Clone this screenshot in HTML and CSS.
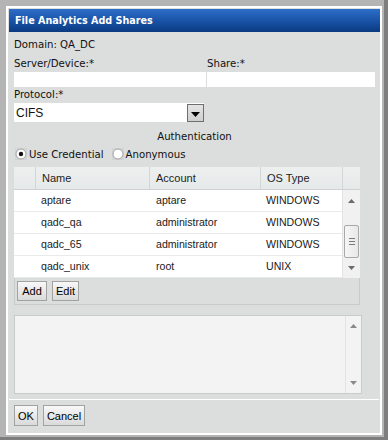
FILE: index.html
```html
<!DOCTYPE html>
<html lang="en">
<head>
    <meta charset="UTF-8">
    <title>File Analytics Add Shares</title>
    <link rel="stylesheet" href="styles.css">
</head>
<body>
    <div class="frame">
        <div class="dialog">
            <div class="titlebar">File Analytics Add Shares</div>

            <div class="content">
                <div class="line">Domain: QA_DC</div>

                <div class="pair">
                    <div class="field server">
                        <div class="line">Server/Device:*</div>
                        <div class="textbox"></div>
                    </div>
                    <div class="field share">
                        <div class="line">Share:*</div>
                        <div class="textbox"></div>
                    </div>
                </div>

                <div class="line label-protocol">Protocol:*</div>
                <div class="select">
                    <span class="select-value">CIFS</span>
                    <span class="select-btn">
                        <svg width="9" height="5" viewBox="0 0 9 5"><path d="M0 0h9L4.5 5z" fill="#000"/></svg>
                    </span>
                </div>

                <div class="line auth-title">Authentication</div>
                <div class="radios">
                    <label class="radio">
                        <svg width="12" height="12" viewBox="0 0 12 12">
                            <rect width="12" height="12" fill="#d2d4d3"/>
                            <circle cx="6" cy="6" r="5" fill="#fff" stroke="#a3a3a3"/>
                            <circle cx="6" cy="6" r="2.2" fill="#111"/>
                        </svg>
                        Use Credential
                    </label>
                    <label class="radio">
                        <svg width="12" height="12" viewBox="0 0 12 12">
                            <rect width="12" height="12" fill="#d2d4d3"/>
                            <circle cx="6" cy="6" r="5" fill="#fff" stroke="#a3a3a3"/>
                        </svg>
                        Anonymous
                    </label>
                </div>

                <!-- Credentials grid -->
                <div class="grid">
                    <div class="grid-head">
                        <div class="hcell"></div>
                        <div class="hcell">Name</div>
                        <div class="hcell">Account</div>
                        <div class="hcell">OS Type</div>
                        <div class="hcell"></div>
                    </div>
                    <div class="grid-body">
                        <div class="rows">
                            <div class="row"><span></span><span>aptare</span><span>aptare</span><span>WINDOWS</span></div>
                            <div class="row"><span></span><span>qadc_qa</span><span>administrator</span><span>WINDOWS</span></div>
                            <div class="row"><span></span><span>qadc_65</span><span>administrator</span><span>WINDOWS</span></div>
                            <div class="row"><span></span><span>qadc_unix</span><span>root</span><span>UNIX</span></div>
                        </div>
                        <div class="vscroll">
                            <svg class="arrow" width="7" height="4" viewBox="0 0 7 4"><path d="M3.5 0L7 4H0z" fill="#6a6a6a"/></svg>
                            <div class="thumb">
                                <svg width="6" height="7" viewBox="0 0 6 7"><path d="M0 .5h6M0 3.5h6M0 6.5h6" stroke="#7a7a7a"/></svg>
                            </div>
                            <svg class="arrow" width="7" height="4" viewBox="0 0 7 4"><path d="M0 0h7L3.5 4z" fill="#6a6a6a"/></svg>
                        </div>
                    </div>
                    <div class="grid-toolbar">
                        <button class="btn btn-add">Add</button>
                        <button class="btn">Edit</button>
                    </div>
                </div>

                <div class="notes">
                    <div class="notes-area"></div>
                    <div class="notes-scroll">
                        <svg width="7" height="4" viewBox="0 0 7 4"><path d="M3.5 0L7 4H0z" fill="#8a8a8a"/></svg>
                        <svg width="7" height="4" viewBox="0 0 7 4"><path d="M0 0h7L3.5 4z" fill="#8a8a8a"/></svg>
                    </div>
                </div>
            </div>

            <div class="footer">
                <button class="btn">OK</button>
                <button class="btn">Cancel</button>
            </div>
        </div>
    </div>
</body>
</html>
```

FILE: styles.css
```css
/* Base */
* {
    box-sizing: border-box;
}

body {
    margin: 0;
    background: #b4b4b4;
    font-family: 'DejaVu Sans', 'Liberation Sans', sans-serif;
    font-stretch: condensed;
    font-size: 11.3px;
    color: #111;
}

/* Window frame */
.frame {
    width: 388px;
    height: 440px;
    padding: 6px 2px 2px 6px;
    background: #b4b4b4;
    border-right: 4px solid #7e7e7e;
    border-bottom: 3px solid #7e7e7e;
}

.dialog {
    height: 100%;
    border: 2px solid #fff;
    background: #dcdedd;
    display: flex;
    flex-direction: column;
}

.titlebar {
    margin: 1px 0 0 1px;
    height: 23px;
    padding-left: 6px;
    line-height: 23px;
    color: #fff;
    font-weight: bold;
    font-size: 10.7px;
    background: linear-gradient(#2d6ec8, #1a54a8 50%, #0a3a80);
}

/* Form */
.content {
    padding: 6px 5px 5px 6px;
}

.line {
    height: 14px;
    line-height: 14px;
    white-space: nowrap;
}

.pair {
    display: flex;
    gap: 1px;
    margin-top: 5px;
}

.server {
    width: 192px;
}

.share {
    flex: 1;
}

.textbox {
    margin-top: 1px;
    height: 15px;
    background: #fff;
}

.label-protocol {
    margin-top: 1px;
}

.select {
    margin-top: 1px;
    width: 190px;
    height: 19px;
    background: #fff;
    display: flex;
    align-items: center;
    justify-content: space-between;
    font-family: 'Liberation Sans', sans-serif;
    font-stretch: normal;
    font-size: 12px;
}

.select-value {
    padding-left: 2px;
}

.select-btn {
    width: 17px;
    height: 18px;
    border: 1px solid #6e6e6e;
    background: linear-gradient(#e4e4e4, #cfcfcf);
    display: flex;
    justify-content: center;
    align-items: flex-end;
    padding-bottom: 4px;
}

.auth-title {
    margin-top: 8px;
    text-align: center;
}

.radios {
    margin-top: 3px;
    display: flex;
    gap: 8px;
    padding-left: 1px;
}

.radio {
    display: flex;
    align-items: center;
    gap: 2px;
    height: 14px;
}

/* Grid */
.grid {
    margin-top: 6px;
    width: 346px;
    font-family: 'Liberation Sans', sans-serif;
    font-stretch: normal;
}

.grid-head {
    display: grid;
    grid-template-columns: 21px 114px 111px 82px 18px;
    height: 23px;
    background: linear-gradient(#eef0f0, #e6e9e9);
    border-bottom: 1px solid #cfd2d1;
    font-size: 11px;
    color: #222;
}

.hcell {
    line-height: 22px;
    padding-left: 6px;
    border-left: 1px solid #d4d6d5;
}

.hcell:first-child {
    border-left: none;
}

.grid-body {
    display: flex;
    height: 88px;
    background: #fff;
}

.rows {
    flex: 1;
}

.row {
    display: grid;
    grid-template-columns: 21px 114px 111px 82px;
    height: 22px;
    line-height: 21px;
    border-bottom: 1px solid #e9ebea;
    font-size: 10.6px;
    color: #1a1a1a;
}

.row span {
    padding-left: 6px;
}

.row span:nth-child(3) {
    padding-left: 7px;
}

.vscroll {
    width: 18px;
    background: #f1f1f1;
    border-left: 1px solid #e4e4e4;
    display: flex;
    flex-direction: column;
    align-items: center;
    padding-top: 9px;
}

.thumb {
    margin-top: 22px;
    width: 15px;
    height: 33px;
    border: 1px solid #a9a9a9;
    border-radius: 2px;
    background: linear-gradient(90deg, #f6f6f6, #e8e8e8);
    display: flex;
    justify-content: center;
    align-items: center;
}

.vscroll .arrow:last-child {
    margin-top: 8px;
}

.grid-toolbar {
    height: 27px;
    border: 1px solid #c9cbca;
    border-top: none;
    display: flex;
    gap: 5px;
    padding: 3px 0 0 2px;
}

/* Buttons */
.btn {
    height: 20px;
    padding: 0 3px;
    border: 1px solid #a2a2a2;
    background: linear-gradient(#f8f8f8, #dadada);
    font-family: 'Liberation Sans', sans-serif;
    font-size: 11px;
    color: #000;
}

.btn-add {
    min-width: 30px;
}

/* Notes box */
.notes {
    margin-top: 10px;
    width: 348px;
    height: 79px;
    border: 1px solid #c9cbca;
    background: #f2f3f2;
    display: flex;
}

.notes-area {
    flex: 1;
}

.notes-scroll {
    width: 16px;
    border-left: 1px solid #e2e3e2;
    display: flex;
    flex-direction: column;
    justify-content: space-between;
    align-items: center;
    padding: 8px 0 8px;
}

/* Footer */
.footer {
    margin: 0 1px;
    flex: 1;
    border-top: 1px solid #fff;
    display: flex;
    gap: 5px;
    padding: 5px 0 0 5px;
}

.footer .btn {
    height: 21px;
}
```
